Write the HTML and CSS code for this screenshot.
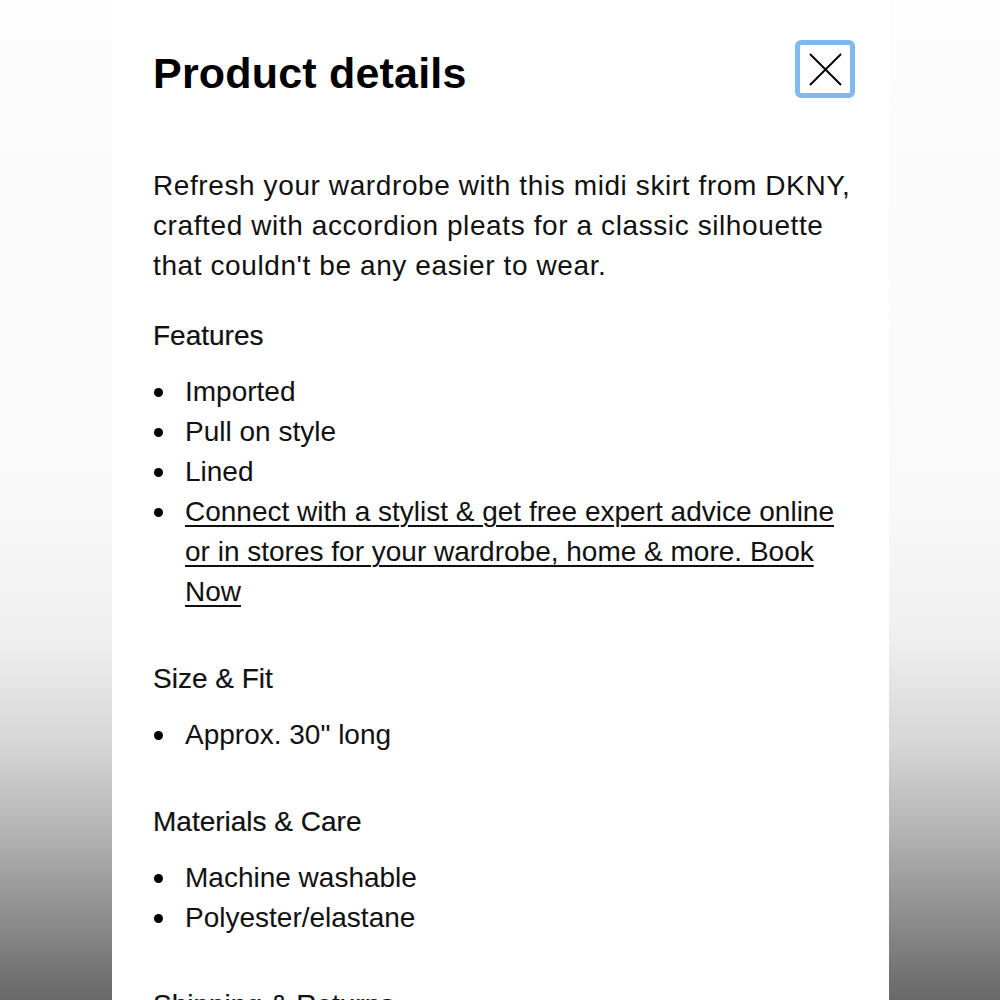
FILE: index.html
```html
<!DOCTYPE html>
<html lang="en">
<head>
<meta charset="utf-8">
<title>Product details</title>
<link rel="stylesheet" href="styles.css">
</head>
<body>
<main class="sheet">
  <header class="sheet-header">
    <h1 class="sheet-title">Product details</h1>
    <button class="close-btn" aria-label="Close">
      <svg viewBox="0 0 34 34" width="33" height="33" aria-hidden="true">
        <path d="M1 1 L33 33 M33 1 L1 33" stroke="#000" stroke-width="2" fill="none"/>
      </svg>
    </button>
  </header>

  <p class="intro">Refresh your wardrobe with this midi skirt from DKNY, crafted with accordion pleats for a classic silhouette that couldn't be any easier to wear.</p>

  <section class="group">
    <h2 class="group-title">Features</h2>
    <ul class="bullets">
      <li>Imported</li>
      <li>Pull on style</li>
      <li>Lined</li>
      <li><a class="link" href="#">Connect with a stylist &amp; get free expert advice online or in stores for your wardrobe, home &amp; more. Book Now</a></li>
    </ul>
  </section>

  <section class="group">
    <h2 class="group-title">Size &amp; Fit</h2>
    <ul class="bullets">
      <li>Approx. 30" long</li>
    </ul>
  </section>

  <section class="group">
    <h2 class="group-title">Materials &amp; Care</h2>
    <ul class="bullets">
      <li>Machine washable</li>
      <li>Polyester/elastane</li>
    </ul>
  </section>

  <section class="group">
    <h2 class="group-title">Shipping &amp; Returns</h2>
  </section>
</main>
</body>
</html>
```

FILE: styles.css
```css
html, body {
  margin: 0;
  padding: 0;
}

body {
  height: 1000px;
  overflow: hidden;
  background: linear-gradient(to bottom,
    #fdfdfd 0%,
    #f9f9f9 50%,
    #efefef 64%,
    #d4d4d4 75%,
    #b0b0b0 84%,
    #8c8c8c 92%,
    #686868 100%);
  font-family: "Liberation Sans", Arial, sans-serif;
  color: #000;
}

.sheet {
  box-sizing: border-box;
  width: 777px;
  min-height: 1100px;
  margin-left: 112px;
  background: #fff;
  padding: 40px 25px 0 41px;
}

.sheet-header {
  display: flex;
  justify-content: space-between;
  align-items: flex-start;
  padding-right: 9px;
}

.sheet-title {
  margin: 8px 0 0 0;
  font-size: 43px;
  line-height: 50px;
  font-weight: 700;
  letter-spacing: 0.2px;
  color: #000;
}

.close-btn {
  box-sizing: border-box;
  width: 60px;
  height: 58px;
  border: 5px solid #80b9ef;
  border-radius: 6px;
  background: #fff;
  padding: 0;
  display: flex;
  align-items: center;
  justify-content: center;
  cursor: pointer;
}

.intro {
  margin: 68px 0 0 0;
  font-size: 28px;
  line-height: 40px;
  letter-spacing: 0.6px;
  color: #111;
}

.group {
  margin-top: 30px;
}

.group + .group {
  margin-top: 47px;
}

.group-title {
  margin: 0;
  font-size: 28px;
  line-height: 40px;
  font-weight: 400;
  color: #111;
  -webkit-text-stroke: 0.2px #111;
}

.bullets {
  list-style: none;
  margin: 16px 0 0 0;
  padding: 0;
}

.bullets li {
  display: flex;
  font-size: 28px;
  line-height: 40px;
  color: #111;
}

.bullets li::before {
  content: "";
  flex: 0 0 9px;
  height: 9px;
  border-radius: 50%;
  background: #000;
  margin: 16px 22px 0 1px;
}

.link {
  color: #111;
  text-decoration: underline;
  text-decoration-thickness: 2px;
  text-underline-offset: 4px;
}
```
